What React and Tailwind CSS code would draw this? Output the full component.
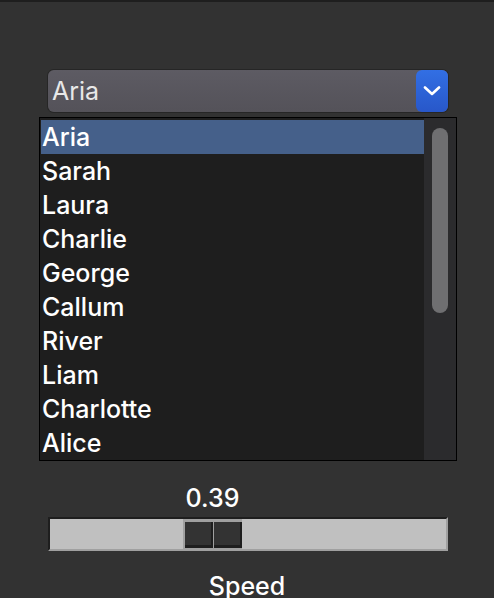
import React from 'react';

const voices = ['Aria', 'Sarah', 'Laura', 'Charlie', 'George', 'Callum', 'River', 'Liam', 'Charlotte', 'Alice'];

const ChevronDown = () => (
  <svg width="18" height="10" viewBox="0 0 18 10" fill="none">
    <path d="M2 1.5 L9 8 L16 1.5" stroke="white" strokeWidth="2.6" strokeLinecap="round" strokeLinejoin="round" />
  </svg>
);

const App = () => {
  const selected = 'Aria';
  const speed = 0.39;

  return (
    <div
      className="w-[494px] h-[598px] overflow-hidden bg-[#323232] border-t-2 border-[#1e1e1e] flex flex-col text-[25px] font-medium"
      style={{ fontFamily: 'Inter, "Noto Sans", sans-serif' }}
    >
      {/* voice dropdown */}
      <div className="mt-[68px] ml-[48px] w-[400px] h-[42px] flex rounded-md bg-gradient-to-b from-[#5d5b63] to-[#545259] shadow-[0_0_0_1px_#262626]">
        <div className="flex-1 pl-[4px] leading-[42px] text-[#e8e8e8] font-normal">{selected}</div>
        <div className="w-[32px] h-[42px] rounded-md bg-gradient-to-b from-[#326fe4] to-[#2857c9] flex items-center justify-center">
          <ChevronDown />
        </div>
      </div>

      {/* list */}
      <div className="mt-[5px] ml-[39px] w-[418px] h-[345px] border border-black bg-[#1e1e1e] flex">
        <div className="w-[384px] pt-[2px] pl-[1px]">
          {voices.map((v) => (
            <div
              key={v}
              className={`h-[34px] leading-[34px] pl-[1px] text-white ${v === selected ? 'bg-[#45608a]' : ''}`}
            >
              {v}
            </div>
          ))}
        </div>
        <div className="flex-1 bg-[#2b2b2d] pt-[10px] flex justify-center">
          <div className="w-[16px] h-[185px] rounded-full bg-[#6f6f71]" />
        </div>
      </div>

      {/* speed slider */}
      <div className="mt-[22px] ml-[183px] w-[59px] h-[30px] leading-[30px] text-center text-white">{speed.toFixed(2)}</div>
      <div className="mt-[4px] ml-[48px] w-[400px] h-[34px] bg-[#c0c0c0] border-t-2 border-l-2 border-t-[#1e1e1e] border-l-[#1e1e1e] border-b-2 border-r-2 border-b-[#a0a0a0] border-r-[#a0a0a0] flex">
        <div className="ml-[133px] w-[59px] h-[30px] bg-[#a0a0a0] pt-[3px] pl-[2px] flex gap-[1px]">
          <div className="w-[28px] h-[26px] bg-[#333333] border-r-2 border-b-[3px] border-[#1e1e1e]" />
          <div className="w-[28px] h-[26px] bg-[#333333] border-r-2 border-b-[3px] border-[#1e1e1e]" />
        </div>
      </div>
      <div className="mt-[20px] h-[30px] leading-[30px] text-center text-white">Speed</div>
    </div>
  );
};

export default App;
